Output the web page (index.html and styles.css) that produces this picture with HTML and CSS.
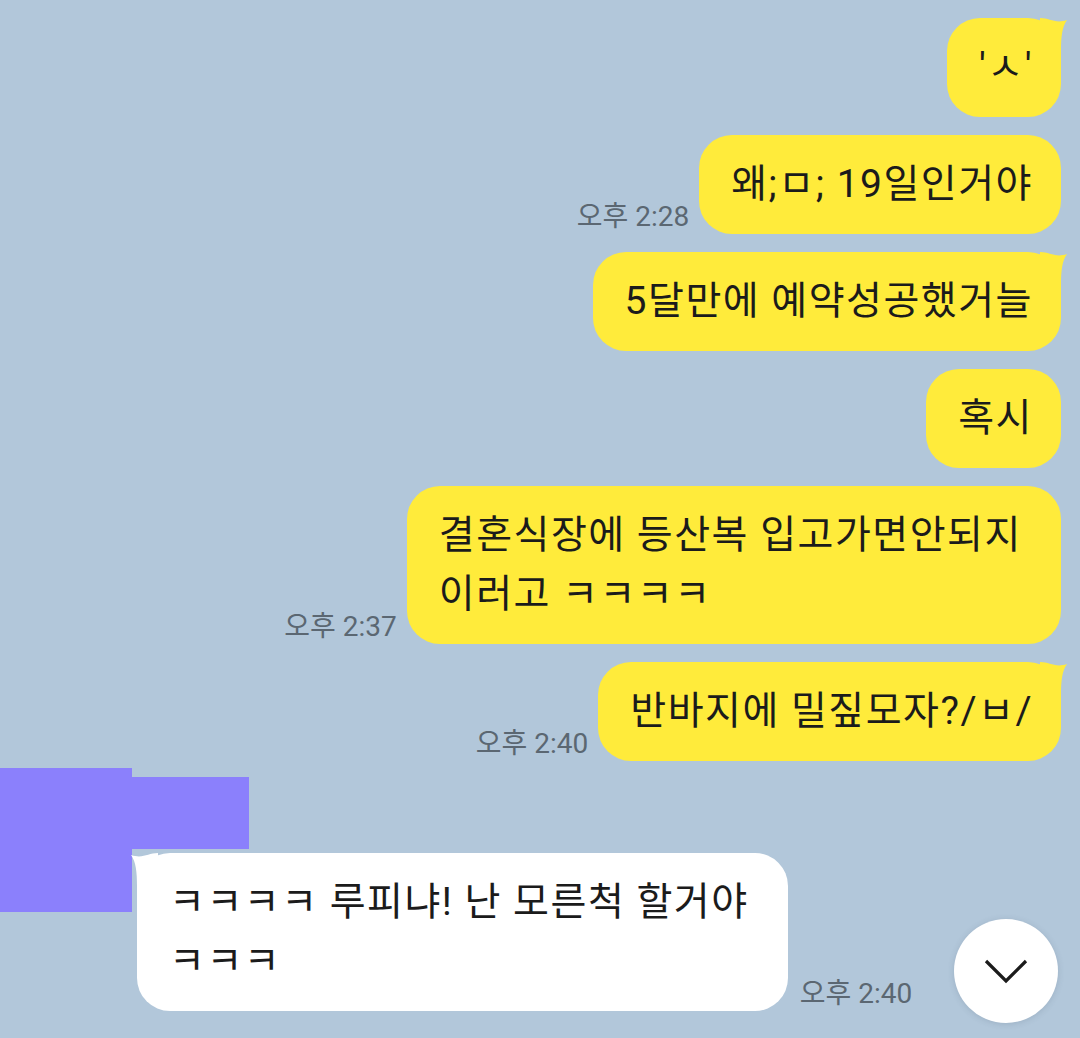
FILE: index.html
```html
<!DOCTYPE html>
<html lang="ko">
<head>
    <meta charset="UTF-8">
    <meta name="viewport" content="width=device-width, initial-scale=1.0">
    <title>채팅</title>
    <link rel="stylesheet" href="styles.css">
</head>
<body>
    <div class="chat">
        <div class="row sent">
            <div class="bubble tail">'ㅅ'
                <svg class="tail-shape" width="28" height="34" viewBox="0 0 28 34"><path d="M0 1 C10 1 15 7 27 3 C22 10 21 20 21 34 L0 34 Z"/></svg>
            </div>
        </div>
        <div class="row sent">
            <span class="time">오후 2:28</span>
            <div class="bubble">왜;ㅁ; 19일인거야</div>
        </div>
        <div class="row sent">
            <div class="bubble tail">5달만에 예약성공했거늘
                <svg class="tail-shape" width="28" height="34" viewBox="0 0 28 34"><path d="M0 1 C10 1 15 7 27 3 C22 10 21 20 21 34 L0 34 Z"/></svg>
            </div>
        </div>
        <div class="row sent">
            <div class="bubble">혹시</div>
        </div>
        <div class="row sent">
            <span class="time">오후 2:37</span>
            <div class="bubble">결혼식장에 등산복 입고가면안되지&nbsp;<br>이러고 ㅋㅋㅋㅋ</div>
        </div>
        <div class="row sent">
            <span class="time">오후 2:40</span>
            <div class="bubble tail">반바지에 밀짚모자?/ㅂ/
                <svg class="tail-shape" width="28" height="34" viewBox="0 0 28 34"><path d="M0 1 C10 1 15 7 27 3 C22 10 21 20 21 34 L0 34 Z"/></svg>
            </div>
        </div>

        <div class="row received">
            <div class="avatar"></div>
            <div class="received-body">
                <div class="name"></div>
                <div class="received-line">
                    <div class="bubble white tail">ㅋㅋㅋㅋ 루피냐! 난 모른척 할거야&nbsp;<br>ㅋㅋㅋ
                        <svg class="tail-shape left" width="28" height="34" viewBox="0 0 28 34"><path d="M0 1 C10 1 15 7 27 3 C22 10 21 20 21 34 L0 34 Z"/></svg>
                    </div>
                    <span class="time">오후 2:40</span>
                </div>
            </div>
        </div>
    </div>

    <button class="scroll-down" aria-label="아래로">
        <svg width="44" height="26" viewBox="0 0 44 26"><path d="M2 3 L22 23 L42 3" fill="none" stroke="#1b1b1b" stroke-width="3.2"/></svg>
    </button>
</body>
</html>
```

FILE: styles.css
```css
body {
    margin: 0;
    height: 1038px;
    overflow: hidden;
    background-color: #b2c7da;
    font-family: Roboto, "Noto Sans CJK KR", sans-serif;
    color: #1b1b1b;
}

.chat {
    padding-top: 18px;
}

.row {
    display: flex;
    align-items: flex-end;
    margin-top: 18px;
}

.row:first-child {
    margin-top: 0;
}

.sent {
    justify-content: flex-end;
    padding-right: 19px;
}

.bubble {
    position: relative;
    background: #ffeb3b;
    border-radius: 33px;
    padding: 20px 28px 20px 32px;
    font-size: 39px;
    letter-spacing: 1.5px;
    line-height: 59px;
    white-space: nowrap;
}

.bubble.white {
    background: #ffffff;
}

.tail-shape {
    position: absolute;
    top: -1px;
    right: -7px;
    fill: #ffeb3b;
}

.tail-shape.left {
    right: auto;
    left: -7px;
    transform: scaleX(-1);
    fill: #ffffff;
}

.time {
    font-size: 28px;
    line-height: 32px;
    color: #5b6772;
    margin-right: 10px;
    padding-bottom: 1px;
}

.received {
    margin-top: 7px;
    align-items: flex-start;
}

.avatar {
    width: 132px;
    height: 144px;
    background: #8b80fc;
}

.received-body {
    display: flex;
    flex-direction: column;
}

.name {
    width: 117px;
    height: 72px;
    margin-top: 9px;
    background: #8b80fc;
}

.received-line {
    display: flex;
    align-items: flex-end;
    margin-top: 4px;
    margin-left: 5px;
}

.received-line .time {
    margin-right: 0;
    margin-left: 12px;
}

.scroll-down {
    position: absolute;
    left: 954px;
    top: 919px;
    width: 104px;
    height: 104px;
    border: none;
    border-radius: 50%;
    background: #ffffff;
    box-shadow: 0 1px 6px rgba(60, 80, 100, 0.18);
    display: flex;
    align-items: center;
    justify-content: center;
    padding: 0;
}
```
